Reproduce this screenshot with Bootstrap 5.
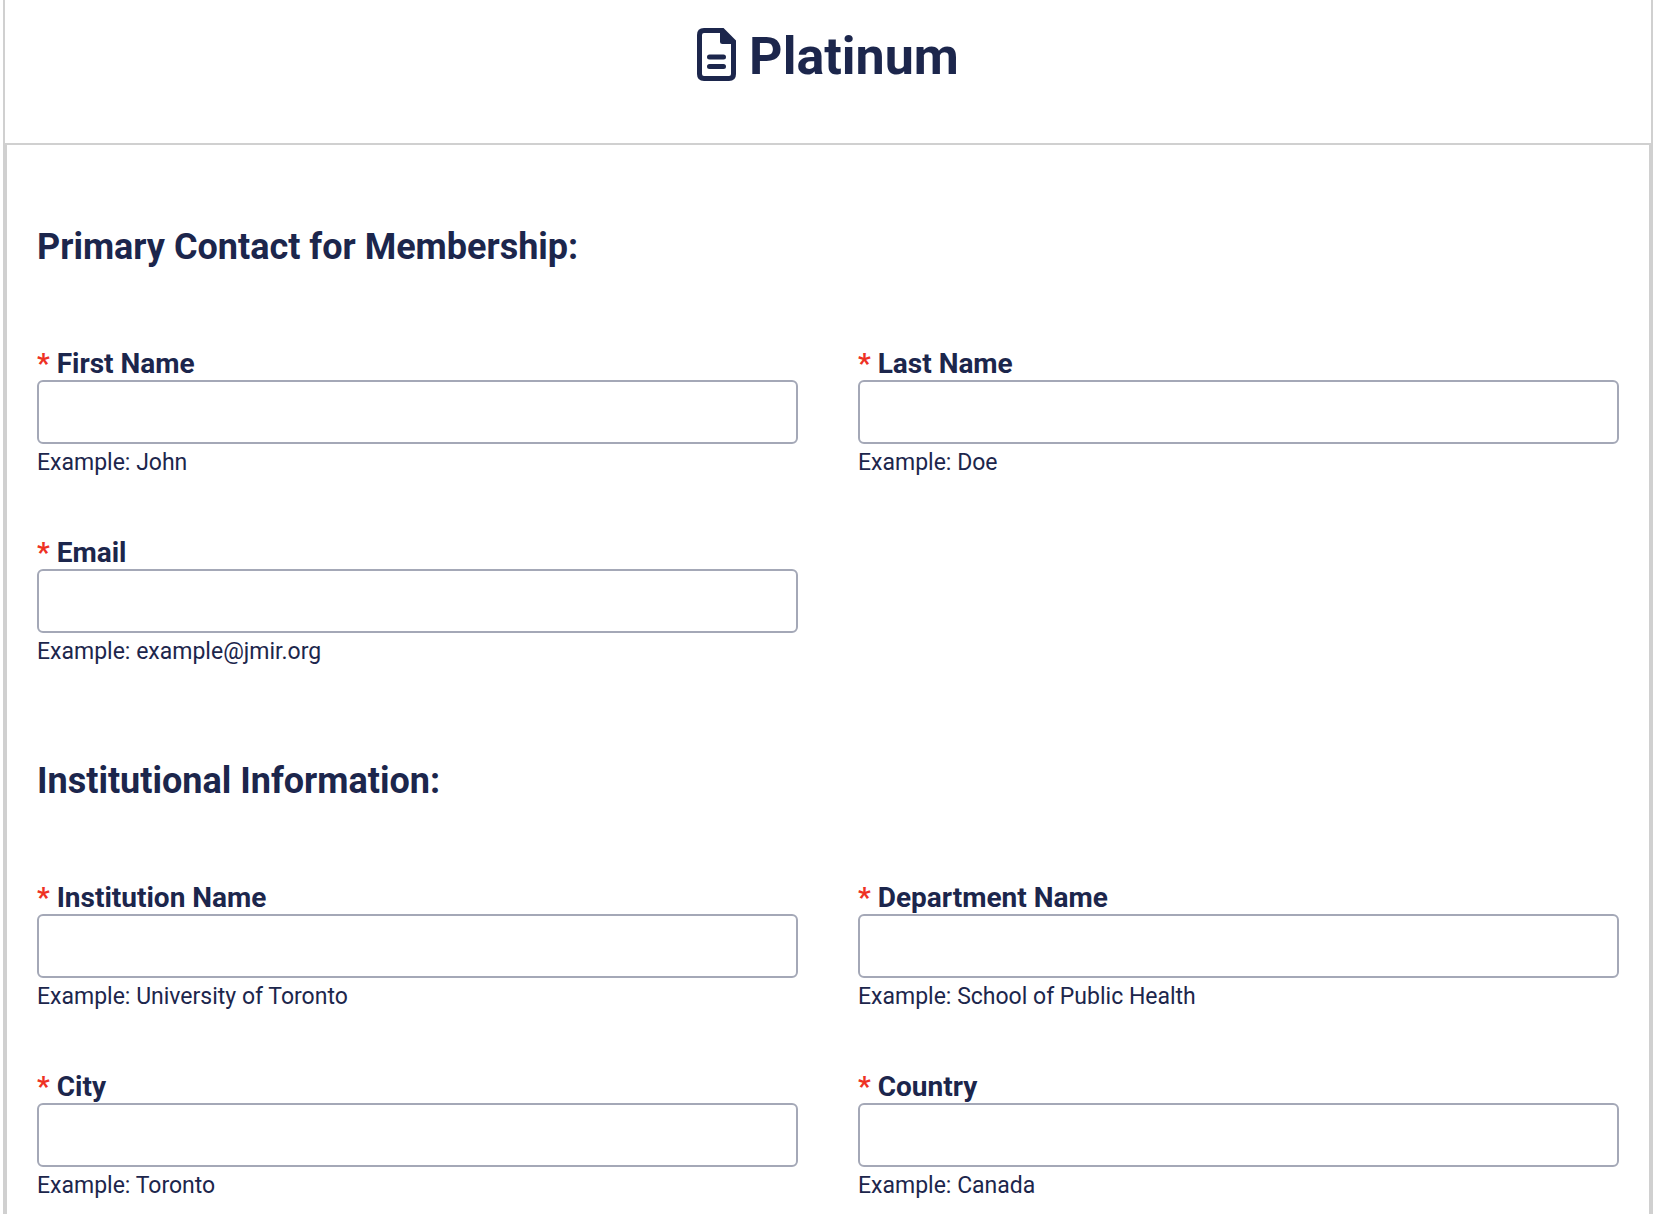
<!DOCTYPE html>
<html lang="en">
<head>
<meta charset="utf-8">
<meta name="viewport" content="width=device-width, initial-scale=1">
<title>Platinum membership</title>
<link href="https://cdn.jsdelivr.net/npm/bootstrap@5.3.0/dist/css/bootstrap.min.css" rel="stylesheet">
<style>
  body { font-family: Roboto, "Liberation Sans", sans-serif; color: #1c264c; background: #fff; }
  .plan-panel { margin: 0 3px; border: solid #d0d0d0; border-width: 0 2px; }
  .plan-header { padding: 28px 30px 62px; }
  .plan-title { font-size: 52px; line-height: 48px; gap: 13px; }
  .plan-icon { width: 39px; height: 53px; }
  .plan-form { border: 2px solid #d0d0d0; padding: 80px 30px 55px; }
  .section-title { font-size: 36px; line-height: 44px; margin-bottom: 79px; }
  .form-section + .form-section { margin-top: 88px; }
  .field-grid { --bs-gutter-x: 60px; --bs-gutter-y: 55px; }
  .field-label { font-size: 28px; line-height: 32px; }
  .required-star { color: #ee3124; }
  .field-input { height: 64px; border: 2px solid #a4a8b7; border-radius: 6px; font-size: 23px; color: inherit; }
  .field-help { font-size: 23px; line-height: 38px; }
</style>
<script src="https://cdn.jsdelivr.net/npm/bootstrap@5.3.0/dist/js/bootstrap.bundle.min.js"></script>
</head>
<body>
<main class="plan-panel">
  <header class="plan-header">
    <h1 class="plan-title d-flex justify-content-center align-items-end fw-bold m-0">
      <svg class="plan-icon" viewBox="0 0 39 53" fill="none" stroke="#1c264c" stroke-width="5" aria-hidden="true">
        <path d="M7 2.500H25.500L36.500 13.500V46Q36.500 50.500 32 50.500H7Q2.500 50.500 2.500 46V7Q2.500 2.500 7 2.500Z"/>
        <path d="M23 2H27L37 12V16H25.500Q23 16 23 13.500Z" fill="#1c264c" stroke="none"/>
        <path d="M12.500 29H26.500M12.500 38.500H26.500" stroke-linecap="round"/>
      </svg>
      <span>Platinum</span>
    </h1>
  </header>
  <form class="plan-form">
    <section class="form-section">
      <h2 class="section-title fw-bold">Primary Contact for Membership:</h2>
      <div class="row field-grid">
        <div class="col-6">
          <label class="field-label fw-bold d-block" for="first-name"><span class="required-star">*</span> First Name</label>
          <input class="form-control field-input" type="text" id="first-name" aria-describedby="first-name-help" required>
          <div class="field-help" id="first-name-help">Example: John</div>
        </div>
        <div class="col-6">
          <label class="field-label fw-bold d-block" for="last-name"><span class="required-star">*</span> Last Name</label>
          <input class="form-control field-input" type="text" id="last-name" aria-describedby="last-name-help" required>
          <div class="field-help" id="last-name-help">Example: Doe</div>
        </div>
        <div class="col-6">
          <label class="field-label fw-bold d-block" for="email"><span class="required-star">*</span> Email</label>
          <input class="form-control field-input" type="email" id="email" aria-describedby="email-help" required>
          <div class="field-help" id="email-help">Example: example@jmir.org</div>
        </div>
      </div>
    </section>
    <section class="form-section">
      <h2 class="section-title fw-bold">Institutional Information:</h2>
      <div class="row field-grid">
        <div class="col-6">
          <label class="field-label fw-bold d-block" for="institution"><span class="required-star">*</span> Institution Name</label>
          <input class="form-control field-input" type="text" id="institution" aria-describedby="institution-help" required>
          <div class="field-help" id="institution-help">Example: University of Toronto</div>
        </div>
        <div class="col-6">
          <label class="field-label fw-bold d-block" for="department"><span class="required-star">*</span> Department Name</label>
          <input class="form-control field-input" type="text" id="department" aria-describedby="department-help" required>
          <div class="field-help" id="department-help">Example: School of Public Health</div>
        </div>
        <div class="col-6">
          <label class="field-label fw-bold d-block" for="city"><span class="required-star">*</span> City</label>
          <input class="form-control field-input" type="text" id="city" aria-describedby="city-help" required>
          <div class="field-help" id="city-help">Example: Toronto</div>
        </div>
        <div class="col-6">
          <label class="field-label fw-bold d-block" for="country"><span class="required-star">*</span> Country</label>
          <input class="form-control field-input" type="text" id="country" aria-describedby="country-help" required>
          <div class="field-help" id="country-help">Example: Canada</div>
        </div>
      </div>
    </section>
  </form>
</main>
</body>
</html>
